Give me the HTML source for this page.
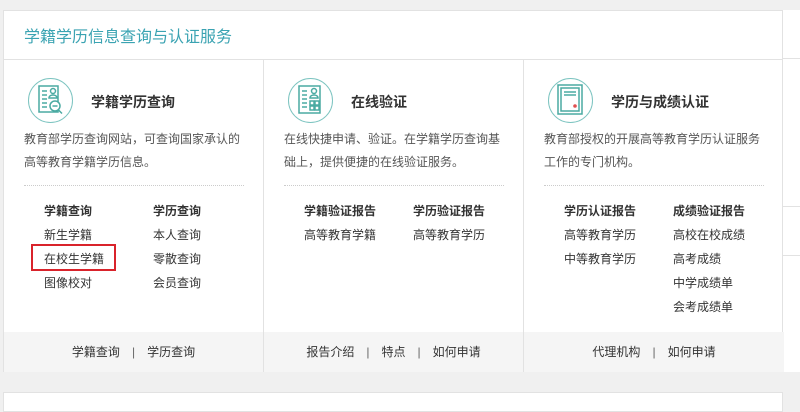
<!DOCTYPE html>
<html><head><meta charset="utf-8"><style>
*{margin:0;padding:0;box-sizing:border-box}
body{width:800px;height:400px;background:#f0f0f0;font-family:"Liberation Sans","Noto Sans CJK SC",sans-serif;position:relative;overflow:hidden;color:#555}
.box{position:absolute;left:3px;top:10px;width:780px;height:362px;background:#fff;border:1px solid #e2e2e2}
.right{position:absolute;left:782px;top:10px;width:18px;height:362px;background:#fff;border-left:1px solid #e2e2e2}
.hl{position:absolute;left:0;width:18px;height:1px;background:#e2e2e2}
.title{position:absolute;left:20px;top:12px;font-size:16px;color:#3aa3b2}
.hd{position:absolute;left:0;top:48px;width:778px;height:1px;background:#e2e2e2}
.col{position:absolute;top:49px;width:260px;height:312px;border-right:1px solid #e2e2e2}
.foot{position:absolute;left:0;bottom:0;width:100%;height:40px;background:#f5f5f5;text-align:center;font-size:12px;color:#333;line-height:40px}
.foot span{color:#666;margin:0 12px}
.ic{position:absolute;left:24px;top:18px;width:45px;height:45px;border:1.5px solid #7cc4c0;border-radius:50%}
.ic svg{position:absolute;left:0;top:0}
.h3{position:absolute;top:32px;font-size:14px;font-weight:bold;color:#333}
.desc{position:absolute;left:20px;top:68px;width:220px;font-size:12px;line-height:23px;color:#555}
.dot{position:absolute;left:20px;top:125px;width:220px;border-top:1px dotted #ccc}
.lk{position:absolute;top:139px;font-size:12px;line-height:24px;color:#333}
.lk b{display:block;color:#333}
.red{position:absolute;left:31px;top:244px;width:85px;height:27px;border:2px solid #d9232b}
.bot{position:absolute;left:3px;top:392px;width:780px;height:20px;background:#fff;border:1px solid #e2e2e2}
</style></head><body>
<div class="right"><div class="hl" style="top:48px"></div><div class="hl" style="top:196px"></div><div class="hl" style="top:245px"></div></div>
<div class="box">
<div class="title">学籍学历信息查询与认证服务</div>
<div class="hd"></div>
<div class="col" style="left:0">
 <div class="ic"><svg width="42" height="42" viewBox="0 0 42 42"><g fill="none" stroke="#4aaaa2" stroke-width="1.5"><rect x="10" y="7" width="19" height="26"/><line x1="13" y1="12" x2="18" y2="12"/><line x1="13" y1="16" x2="18" y2="16"/><line x1="13" y1="20" x2="18" y2="20"/><line x1="13" y1="24" x2="18" y2="24"/><line x1="13" y1="28" x2="18" y2="28"/><circle cx="24" cy="12" r="2.5"/><path d="M20 19c0-4 8-4 8 0z"/><circle cx="26" cy="27" r="5" fill="#fff"/><line x1="23.5" y1="27" x2="28.5" y2="27"/><line x1="29.5" y1="31" x2="33" y2="34.5"/></g></svg></div>
 <div class="h3" style="left:87px">学籍学历查询</div>
 <div class="desc">教育部学历查询网站，可查询国家承认的高等教育学籍学历信息。</div>
 <div class="dot"></div>
 <div class="lk" style="left:40px"><b>学籍查询</b>新生学籍<br>在校生学籍<br>图像校对</div>
 <div class="lk" style="left:149px"><b>学历查询</b>本人查询<br>零散查询<br>会员查询</div>
 <div class="foot">学籍查询<span>|</span>学历查询</div>
</div>
<div class="col" style="left:260px">
 <div class="ic"><svg width="42" height="42" viewBox="0 0 42 42"><g fill="none" stroke="#4aaaa2" stroke-width="1.5"><rect x="10" y="7" width="21" height="27"/><line x1="13" y1="12" x2="18" y2="12"/><line x1="13" y1="16" x2="18" y2="16"/><line x1="13" y1="20" x2="18" y2="20"/><line x1="13" y1="24" x2="18" y2="24"/><line x1="13" y1="28" x2="18" y2="28"/><circle cx="25" cy="12" r="2.5"/><path d="M21 19c0-4 8-4 8 0z"/><rect x="21" y="22" width="4" height="4"/><rect x="26" y="22" width="4" height="4"/><rect x="21" y="27" width="4" height="4"/><rect x="26" y="27" width="4" height="4"/></g></svg></div>
 <div class="h3" style="left:87px">在线验证</div>
 <div class="desc">在线快捷申请、验证。在学籍学历查询基础上，提供便捷的在线验证服务。</div>
 <div class="dot"></div>
 <div class="lk" style="left:40px"><b>学籍验证报告</b>高等教育学籍</div>
 <div class="lk" style="left:149px"><b>学历验证报告</b>高等教育学历</div>
 <div class="foot">报告介绍<span>|</span>特点<span>|</span>如何申请</div>
</div>
<div class="col" style="left:520px;border-right:none">
 <div class="ic"><svg width="42" height="42" viewBox="0 0 42 42"><g fill="none" stroke="#4aaaa2" stroke-width="1.5"><rect x="9" y="6" width="24" height="29"/><rect x="12" y="9" width="18" height="23"/><line x1="15" y1="13" x2="27" y2="13"/><line x1="15" y1="16" x2="27" y2="16"/></g><circle cx="26" cy="27" r="1.8" fill="#e05050"/></svg></div>
 <div class="h3" style="left:87px">学历与成绩认证</div>
 <div class="desc">教育部授权的开展高等教育学历认证服务工作的专门机构。</div>
 <div class="dot"></div>
 <div class="lk" style="left:40px"><b>学历认证报告</b>高等教育学历<br>中等教育学历</div>
 <div class="lk" style="left:149px"><b>成绩验证报告</b>高校在校成绩<br>高考成绩<br>中学成绩单<br>会考成绩单</div>
 <div class="foot">代理机构<span>|</span>如何申请</div>
</div>
</div>
<div class="red"></div>
<div class="bot"></div>
</body></html>
